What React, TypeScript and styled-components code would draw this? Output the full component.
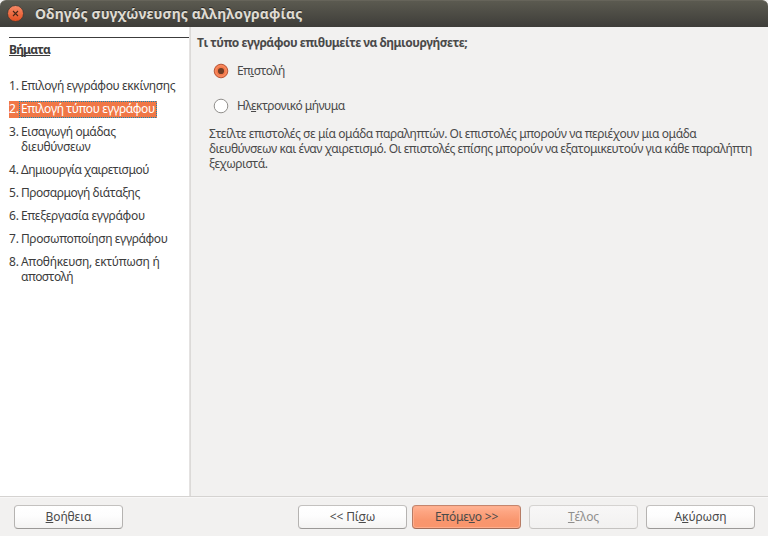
import React from "react";
import styled, { createGlobalStyle, css } from "styled-components";

const GlobalStyle = createGlobalStyle`
  *, *::before, *::after { box-sizing: border-box; }
  body {
    margin: 0;
    overflow: hidden;
    background: #3c3b37;
    color: #4a4a4a;
    font: 12px/15px "Noto Sans", "Open Sans", sans-serif;
    font-kerning: none;
  }
  #root { height: 100vh; }
`;

const Window = styled.div`
  display: flex;
  flex-direction: column;
  height: 100vh;
  background: #f2f1f0;
`;

const TitleBar = styled.header`
  display: flex;
  align-items: flex-start;
  flex: 0 0 27px;
  gap: 11px;
  padding: 4px 0 0 7px;
  border-top: 1px solid #66645a;
  border-radius: 6px 6px 0 0;
  background: linear-gradient(#5b5a50, #3e3d39);
`;

const CloseButton = styled.button`
  display: flex;
  width: 17px;
  height: 17px;
  padding: 0;
  border: 0;
  background: none;
`;

const Title = styled.h1`
  margin: 0;
  color: #dfdbd2;
  font-size: 14px;
  font-weight: 700;
  line-height: 18px;
  letter-spacing: 0.05px;
  text-shadow: 0 -1px 0 #2b2a27;
  white-space: nowrap;
`;

const Body = styled.div`
  display: flex;
  flex: 1;
  min-height: 0;
`;

const Sidebar = styled.nav`
  flex: 0 0 191px;
  padding: 10px 0 0 9px;
  border-right: 1px solid #dcdad8;
  background: #fff;
  box-shadow: inset -1px 0 #e4e2e1;
  color: #3c3c3c;
`;

const StepsHeading = styled.h2`
  width: 180px;
  margin: 0;
  padding-top: 4px;
  border-top: 1px solid #3c3c3c;
  font-size: 12px;
  font-weight: 700;
  line-height: 15px;
  letter-spacing: -0.85px;
  text-decoration: underline;
  text-decoration-skip-ink: none;
  text-decoration-thickness: 1px;
  text-underline-offset: 1px;
`;

const StepList = styled.ol`
  display: flex;
  flex-direction: column;
  align-items: flex-start;
  gap: 8px;
  margin: 21px 0 0;
  padding: 0;
  list-style: none;
`;

const Step = styled.li<{ $active?: boolean }>`
  display: grid;
  grid-template-columns: 10px auto;
  ${({ $active }) =>
    $active &&
    css`
      height: 17px;
      margin-bottom: -2px;
      background: #f07746;
      color: #fff;
    `}
`;

const StepNumber = styled.span`
  letter-spacing: -0.2px;
`;

const dotsX = "repeating-linear-gradient(90deg, #0f88b9 0 1px, #f07746 1px 2px)";
const dotsY = "repeating-linear-gradient(#0f88b9 0 1px, #f07746 1px 2px)";

const StepLabel = styled.span<{ $active?: boolean }>`
  padding: 0 1px 0 2px;
  white-space: nowrap;
  ${({ $active }) =>
    $active &&
    css`
      height: 17px;
      padding-right: 2px;
      background:
        ${dotsX} top / 100% 1px no-repeat,
        ${dotsX} bottom / 100% 1px no-repeat,
        ${dotsY} left / 1px 100% no-repeat,
        ${dotsY} right / 1px 100% no-repeat;
    `}
`;

const Line = styled.span<{ $track: number }>`
  display: block;
  letter-spacing: ${({ $track }) => $track}px;
  white-space: nowrap;
`;

const Content = styled.main`
  flex: 1;
  min-width: 0;
  padding: 8px 0 0 6px;
`;

const Question = styled.h2`
  margin: 0;
  font-size: 12px;
  line-height: 15px;
  font-weight: 700;
  letter-spacing: -0.52px;
  white-space: nowrap;
`;

const Options = styled.div`
  display: flex;
  flex-direction: column;
  gap: 19px;
  margin: 12px 0 0 16px;
`;

const Option = styled.label`
  display: flex;
  align-items: center;
  gap: 8px;
  height: 16px;
`;

const RadioIcon = styled.svg`
  flex: none;
  width: 16px;
  height: 16px;
  margin-top: 1px;
`;

const Description = styled.div`
  margin: 13px 0 0 12px;
`;

const Footer = styled.footer`
  display: flex;
  flex: 0 0 40px;
  align-items: flex-start;
  padding: 8px 13px 0 14px;
  border-top: 1px solid #d5d3d1;
  box-shadow: inset 0 1px #f8f7f7;
`;

const NavButtons = styled.div`
  display: flex;
  gap: 8px;
  margin-left: auto;
`;

const StepButtons = styled.div`
  display: flex;
  gap: 5px;
`;

const looks = {
  normal: css`
    border-color: #c3c1bf #b5b3b1 #9b9997;
    background: linear-gradient(#ffffff, #fdfdfd 45%, #f4f3f2);
  `,
  primary: css`
    border-color: #c4866e #b67c65 #a16d59;
    background: linear-gradient(#ffb596, #fda582 25%, #f9966e 65%, #f9956c);
    box-shadow: inset 0 0 0 1px #ffae8d;
  `,
  disabled: css`
    border-color: #d5d3d1 #d0cecc #c5c3c1;
    background: linear-gradient(#f8f7f7, #f2f1f0);
    color: #8f8e8c;
  `,
};

const PushButton = styled.button<{ $look?: keyof typeof looks; $track: number }>`
  width: 109px;
  height: 24px;
  padding: 0 0 2px;
  border: 1px solid;
  border-radius: 4px;
  color: #4a4a4a;
  font: inherit;
  letter-spacing: ${({ $track }) => $track}px;
  ${({ $look = "normal" }) => looks[$look]}
`;

const Key = styled.span`
  text-decoration: underline;
  text-decoration-skip-ink: none;
  text-decoration-thickness: 1px;
  text-underline-offset: 1px;
`;

type TextLine = [text: string, tracking: number];

const steps: TextLine[][] = [
  [["Επιλογή εγγράφου εκκίνησης", -0.38]],
  [["Επιλογή τύπου εγγράφου", -0.42]],
  [["Εισαγωγή ομάδας", -0.39], ["διευθύνσεων", -0.35]],
  [["Δημιουργία χαιρετισμού", -0.53]],
  [["Προσαρμογή διάταξης", -0.46]],
  [["Επεξεργασία εγγράφου", -0.33]],
  [["Προσωποποίηση εγγράφου", -0.4]],
  [["Αποθήκευση, εκτύπωση ή", -0.3], ["αποστολή", -0.58]],
];

const description: TextLine[] = [
  ["Στείλτε επιστολές σε μία ομάδα παραληπτών. Οι επιστολές μπορούν να περιέχουν μια ομάδα", -0.44],
  ["διευθύνσεων και έναν χαιρετισμό. Οι επιστολές επίσης μπορούν να εξατομικευτούν για κάθε παραλήπτη", -0.485],
  ["ξεχωριστά.", -0.5],
];

const activeStep = 1;

function Radio({ checked = false }: { checked?: boolean }) {
  return (
    <RadioIcon viewBox="0 0 16 16">
      <circle cx="8" cy="8" r="6.8" fill={checked ? "#f47a4b" : "#fff"} stroke={checked ? "#b8583a" : "#918f8c"} />
      {checked && (
        <>
          <circle cx="8" cy="8" r="5.3" fill="none" stroke="#fa8f65" strokeWidth="1" />
          <circle cx="8" cy="8" r="3.1" fill="#713d26" />
        </>
      )}
    </RadioIcon>
  );
}

export default function App() {
  return (
    <>
      <GlobalStyle />
      <Window>
        <TitleBar>
          <CloseButton aria-label="Κλείσιμο">
            <svg width="17" height="17" viewBox="0 0 17 17">
              <defs>
                <linearGradient id="closeFill" x2="0" y2="1">
                  <stop stopColor="#f78b68" />
                  <stop offset="1" stopColor="#e34e20" />
                </linearGradient>
              </defs>
              <circle cx="8.5" cy="8.5" r="8" fill="url(#closeFill)" stroke="#3b3833" strokeWidth="0.8" />
              <path d="M6 6l5 5M11 6l-5 5" stroke="#492818" strokeWidth="1.1" />
            </svg>
          </CloseButton>
          <Title>Οδηγός συγχώνευσης αλληλογραφίας</Title>
        </TitleBar>
        <Body>
          <Sidebar>
            <StepsHeading>Βήματα</StepsHeading>
            <StepList>
              {steps.map((lines, i) => (
                <Step key={i} $active={i === activeStep}>
                  <StepNumber>{i + 1}.</StepNumber>
                  <StepLabel $active={i === activeStep}>
                    {lines.map(([text, track]) => (
                      <Line key={text} $track={track}>{text}</Line>
                    ))}
                  </StepLabel>
                </Step>
              ))}
            </StepList>
          </Sidebar>
          <Content>
            <Question>Τι τύπο εγγράφου επιθυμείτε να δημιουργήσετε;</Question>
            <Options>
              <Option>
                <Radio checked />
                <Line $track={-0.6}>Επ<Key>ι</Key>στολή</Line>
              </Option>
              <Option>
                <Radio />
                <Line $track={-0.56}>Ηλ<Key>ε</Key>κτρονικό μήνυμα</Line>
              </Option>
            </Options>
            <Description>
              {description.map(([text, track]) => (
                <Line key={text} $track={track}>{text}</Line>
              ))}
            </Description>
          </Content>
        </Body>
        <Footer>
          <PushButton $track={-0.12}><Key>Β</Key>οήθεια</PushButton>
          <NavButtons>
            <StepButtons>
              <PushButton $track={-0.15}>&lt;&lt; Πί<Key>σ</Key>ω</PushButton>
              <PushButton $look="primary" $track={-0.2}>Επόμε<Key>ν</Key>ο &gt;&gt;</PushButton>
            </StepButtons>
            <PushButton $look="disabled" $track={-0.1} disabled><Key>Τ</Key>έλος</PushButton>
            <PushButton $track={-0.1}>Α<Key>κ</Key>ύρωση</PushButton>
          </NavButtons>
        </Footer>
      </Window>
    </>
  );
}
